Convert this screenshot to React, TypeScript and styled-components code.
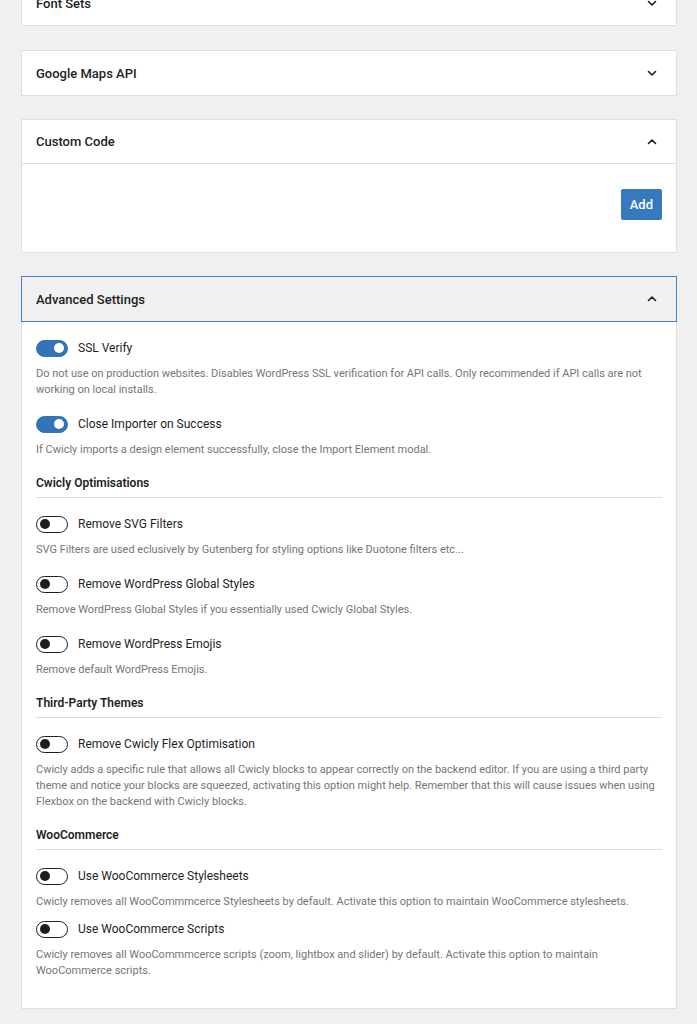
import React from "react";
import styled, { createGlobalStyle } from "styled-components";

const GlobalStyle = createGlobalStyle`
  html, body { margin: 0; padding: 0; }
  body {
    background: #f0f0f1;
    font-family: Roboto, "Liberation Sans", Arial, sans-serif;
    color: #1e1e1e;
    -webkit-font-smoothing: antialiased;
  }
  * { box-sizing: border-box; }
`;

const Page = styled.div`
  margin-top: -20px;
  padding: 0 20px 20px 21px;
`;

const Panel = styled.section`
  background: #fff;
  border: 1px solid #e0e0e0;
  margin-bottom: 23px;
`;

const FirstPanel = styled(Panel)`
  margin-bottom: 24px;
`;

const PanelHeader = styled.div<{ $active?: boolean; $divided?: boolean }>`
  height: 44px;
  display: flex;
  align-items: center;
  justify-content: space-between;
  padding: 0 18px 0 14px;
  font-size: 13px;
  font-weight: 500;
  color: #1e1e1e;
  background: ${(p) => (p.$active ? "#f0f0f1" : "#fff")};
  outline: ${(p) => (p.$active ? "1px solid #3d83c6" : "none")};
  border-bottom: ${(p) => (p.$divided ? "1px solid #e0e0e0" : "none")};
`;

const Chevron = styled.svg`
  width: 12px;
  height: 12px;
  flex: none;
`;

const CodeBody = styled.div`
  height: 88px;
  display: flex;
  justify-content: flex-end;
  align-items: flex-start;
  padding: 25px 14px 0;
`;

const PrimaryButton = styled.button`
  height: 31px;
  padding: 0 9px;
  border: none;
  border-radius: 2px;
  background: #3779bd;
  color: #fff;
  font-family: inherit;
  font-size: 13px;
  font-weight: 500;
  cursor: pointer;
`;

const SettingsBody = styled.div`
  padding: 17px 14px 13px;
`;

const Item = styled.div<{ $tight?: boolean }>`
  margin-bottom: ${(p) => (p.$tight ? "9px" : "16px")};
`;

const ToggleRow = styled.label`
  display: flex;
  align-items: center;
  gap: 10px;
  height: 20px;
  font-size: 12px;
  color: #1e1e1e;
`;

const Track = styled.span<{ $on?: boolean }>`
  width: 32px;
  height: 17px;
  border-radius: 9px;
  display: flex;
  align-items: center;
  justify-content: ${(p) => (p.$on ? "flex-end" : "flex-start")};
  padding: 0 3px;
  background: ${(p) => (p.$on ? "#3174b8" : "#fff")};
  border: 1px solid ${(p) => (p.$on ? "#3174b8" : "#1e1e1e")};
  flex: none;
`;

const Knob = styled.span<{ $on?: boolean }>`
  width: 10px;
  height: 10px;
  border-radius: 50%;
  background: ${(p) => (p.$on ? "#fff" : "#1e1e1e")};
`;

const Help = styled.p`
  margin: 8px 0 0;
  font-size: 11px;
  line-height: 16px;
  color: #757575;
`;

const SectionHeading = styled.h3`
  margin: 17px 0 16px;
  padding-bottom: 6px;
  border-bottom: 1px solid #dcdcde;
  font-size: 12px;
  line-height: 16px;
  font-weight: 600;
  color: #1e1e1e;
`;

const ChevronIcon = ({ up }: { up?: boolean }) => (
  <Chevron viewBox="0 0 12 12" fill="none">
    <path
      d={up ? "M2.5 7.5 L6 4 L9.5 7.5" : "M2.5 4.5 L6 8 L9.5 4.5"}
      stroke="#1e1e1e"
      strokeWidth="1.6"
      strokeLinecap="round"
      strokeLinejoin="round"
    />
  </Chevron>
);

type Setting = { label: string; help: string; on?: boolean; tight?: boolean };

const Toggle = ({ on }: { on?: boolean }) => (
  <Track $on={on}>
    <Knob $on={on} />
  </Track>
);

const SettingItem = ({ s }: { s: Setting }) => (
  <Item $tight={s.tight}>
    <ToggleRow>
      <Toggle on={s.on} />
      {s.label}
    </ToggleRow>
    <Help>{s.help}</Help>
  </Item>
);

const general: Setting[] = [
  {
    label: "SSL Verify",
    on: true,
    help: "Do not use on production websites. Disables WordPress SSL verification for API calls. Only recommended if API calls are not working on local installs.",
  },
  {
    label: "Close Importer on Success",
    on: true,
    help: "If Cwicly imports a design element successfully, close the Import Element modal.",
  },
];

const optimisations: Setting[] = [
  {
    label: "Remove SVG Filters",
    help: "SVG Filters are used eclusively by Gutenberg for styling options like Duotone filters etc...",
  },
  {
    label: "Remove WordPress Global Styles",
    help: "Remove WordPress Global Styles if you essentially used Cwicly Global Styles.",
  },
  {
    label: "Remove WordPress Emojis",
    help: "Remove default WordPress Emojis.",
  },
];

const themes: Setting[] = [
  {
    label: "Remove Cwicly Flex Optimisation",
    help: "Cwicly adds a specific rule that allows all Cwicly blocks to appear correctly on the backend editor. If you are using a third party theme and notice your blocks are squeezed, activating this option might help. Remember that this will cause issues when using Flexbox on the backend with Cwicly blocks.",
  },
];

const woo: Setting[] = [
  {
    label: "Use WooCommerce Stylesheets",
    tight: true,
    help: "Cwicly removes all WooCommmcerce Stylesheets by default. Activate this option to maintain WooCommerce stylesheets.",
  },
  {
    label: "Use WooCommerce Scripts",
    help: "Cwicly removes all WooCommmcerce scripts (zoom, lightbox and slider) by default. Activate this option to maintain WooCommerce scripts.",
  },
];

export default function App() {
  return (
    <>
      <GlobalStyle />
      <Page>
        <FirstPanel>
          <PanelHeader>
            Font Sets
            <ChevronIcon />
          </PanelHeader>
        </FirstPanel>
        <Panel>
          <PanelHeader>
            Google Maps API
            <ChevronIcon />
          </PanelHeader>
        </Panel>
        <Panel>
          <PanelHeader $divided>
            Custom Code
            <ChevronIcon up />
          </PanelHeader>
          <CodeBody>
            <PrimaryButton>Add</PrimaryButton>
          </CodeBody>
        </Panel>
        <Panel>
          <PanelHeader $active>
            Advanced Settings
            <ChevronIcon up />
          </PanelHeader>
          <SettingsBody>
            {general.map((s) => (
              <SettingItem key={s.label} s={s} />
            ))}
            <SectionHeading>Cwicly Optimisations</SectionHeading>
            {optimisations.map((s) => (
              <SettingItem key={s.label} s={s} />
            ))}
            <SectionHeading>Third-Party Themes</SectionHeading>
            {themes.map((s) => (
              <SettingItem key={s.label} s={s} />
            ))}
            <SectionHeading>WooCommerce</SectionHeading>
            {woo.map((s) => (
              <SettingItem key={s.label} s={s} />
            ))}
          </SettingsBody>
        </Panel>
      </Page>
    </>
  );
}
